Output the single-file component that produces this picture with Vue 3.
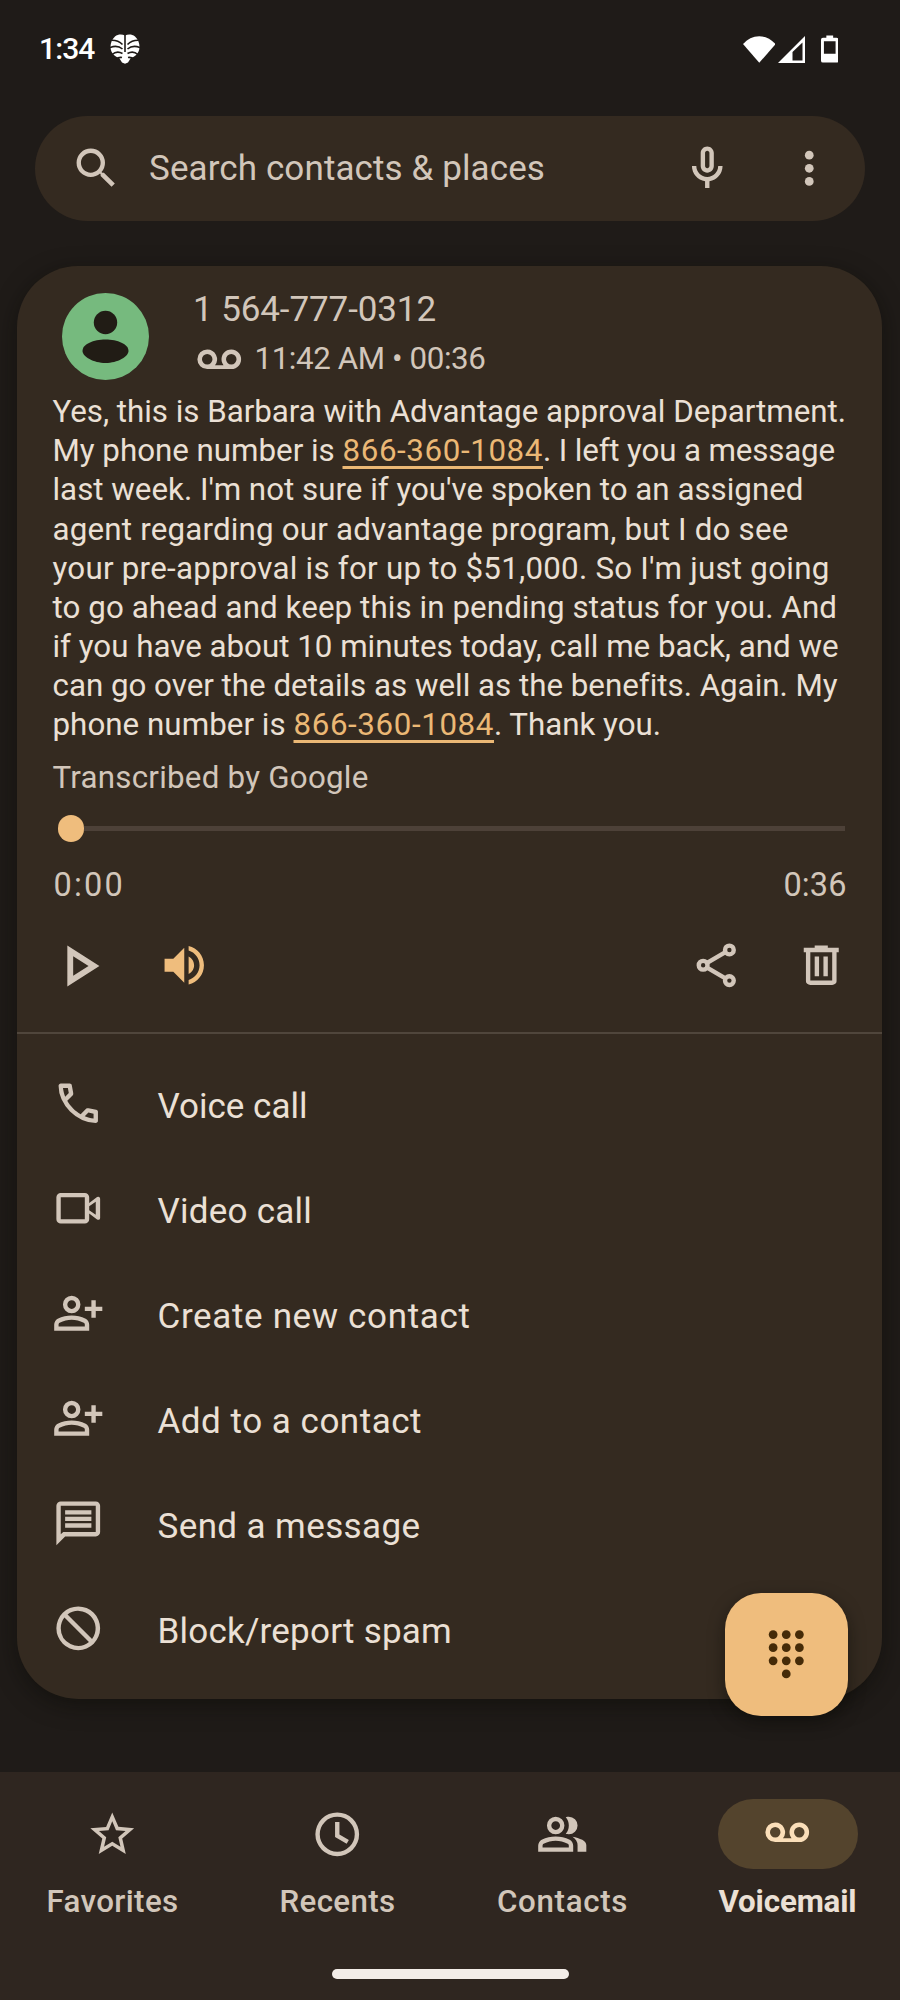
<script setup>
import { ref } from "vue"

// Spreads the letters of a text run so that it takes the given advance width
const vFit = {
  mounted(el, { value }) {
    const natural = el.getBoundingClientRect().width
    el.style.letterSpacing = `${(value - natural) / el.textContent.length}px`
  }
}

const transcript = [
  [{ text: "Yes, this is Barbara with Advantage approval Department.", width: 793.5 }],
  [
    { text: "My phone number is ", width: 290 },
    { text: "866-360-1084", width: 200.5, link: true },
    { text: ". I left you a message", width: 292 }
  ],
  [{ text: "last week. I'm not sure if you've spoken to an assigned", width: 751 }],
  [{ text: "agent regarding our advantage program, but I do see", width: 736 }],
  [{ text: "your pre-approval is for up to $51,000. So I'm just going", width: 777 }],
  [{ text: "to go ahead and keep this in pending status for you. And", width: 784.5 }],
  [{ text: "if you have about 10 minutes today, call me back, and we", width: 786 }],
  [{ text: "can go over the details as well as the benefits. Again. My", width: 784 }],
  [
    { text: "phone number is ", width: 241 },
    { text: "866-360-1084", width: 200.5, link: true },
    { text: ". Thank you.", width: 167 }
  ]
]

const personAdd =
  "M9 12a4 4 0 1 1 0-8 4 4 0 0 1 0 8zm0-2a2 2 0 1 0 0-4 2 2 0 0 0 0 4zM1 20v-2.8q0-.85.438-1.563T2.6 14.55q1.55-.775 3.15-1.163T9 13q1.65 0 3.25.387t3.15 1.163q.725.375 1.163 1.088T17 17.2V20H1zm2-2h12v-.8q0-.275-.137-.5t-.363-.35q-1.35-.675-2.725-1.012T9 15q-1.4 0-2.775.338T3.5 16.35q-.225.125-.363.35T3 17.2v.8zM18 14v-3h-3V9h3V6h2v3h3v2h-3v3h-2z"

const actions = [
  {
    label: "Voice call",
    width: 150,
    path: "M19.95 21q-3.125 0-6.175-1.363t-5.55-3.862q-2.5-2.5-3.863-5.55T3 4.05q0-.45.3-.75t.75-.3H8.1q.35 0 .625.237t.325.563l.65 3.5q.05.4-.025.675T9.4 8.45L6.975 10.9q.5.925 1.187 1.787t1.513 1.663q.775.775 1.625 1.438T13.1 17l2.35-2.35q.225-.225.588-.338t.712-.062l3.45.7q.35.1.575.363T21 15.9v4.05q0 .45-.3.75t-.75.3zM6.025 9l1.65-1.65L7.25 5H5.025q.125 1.025.35 2.025T6.025 9zm8.95 8.95q.975.425 1.988.675T19 18.95v-2.2l-2.35-.475-1.675 1.675z"
  },
  {
    label: "Video call",
    width: 154.5,
    path: "M4 19q-.825 0-1.413-.587T2 17V7q0-.825.587-1.413T4 5h11q.825 0 1.413.587T17 7v2.6l3.6-2.7q.5-.3.95-.1T22 7.6v8.8q0 .6-.45.8t-.95-.1L17 14.4V17q0 .825-.587 1.413T15 19H4zm0-2h11V7H4v10zm13-5.9v1.8l3 2.1V9l-3 2.1z"
  },
  { label: "Create new contact", width: 313, path: personAdd },
  { label: "Add to a contact", width: 264.5, path: personAdd },
  {
    label: "Send a message",
    width: 263,
    path: "M2 22V4q0-.825.588-1.413T4 2h16q.825 0 1.413.587T22 4v12q0 .825-.587 1.413T20 18H6l-4 4zm2-5h0l1.15-1H20V4H4v13zM6 6h12v2H6zM6 9h12v2H6zM6 12h12v2H6z"
  },
  {
    label: "Block/report spam",
    width: 294.5,
    path: "M12 2a10 10 0 1 0 0 20 10 10 0 0 0 0-20zM4 12c0-1.85.63-3.55 1.69-4.9L16.9 18.31A8 8 0 0 1 4 12zm14.31 4.9L7.1 5.69A8 8 0 0 1 18.31 16.9z"
  }
]

const voicemailIcon =
  "M6.5 7.5a4.5 4.5 0 0 0 0 9h11a4.5 4.5 0 1 0-3.55-1.75h-3.9A4.5 4.5 0 0 0 6.5 7.5zM6.5 9.6a2.4 2.4 0 1 1 0 4.8 2.4 2.4 0 0 1 0-4.8zM17.5 9.6a2.4 2.4 0 1 1 0 4.8 2.4 2.4 0 0 1 0-4.8z"

const tabs = [
  {
    label: "Favorites",
    width: 132,
    path: "M22 9.24l-7.19-.62L12 2 9.19 8.63 2 9.24l5.46 4.73L5.82 21 12 17.27 18.18 21l-1.63-7.03L22 9.24zM12 15.4l-3.76 2.27 1-4.28-3.32-2.88 4.38-.38L12 6.1l1.71 4.04 4.38.38-3.32 2.88 1 4.28L12 15.4z"
  },
  {
    label: "Recents",
    width: 116,
    path: "M12 2a10 10 0 1 0 0 20 10 10 0 0 0 0-20zm0 2a8 8 0 1 1 0 16 8 8 0 0 1 0-16zM11 6.4h2v5.7l4.3 2.5-1 1.7L11 13.2z"
  },
  {
    label: "Contacts",
    width: 131,
    path: "M9 12a4 4 0 1 1 0-8 4 4 0 0 1 0 8zm0-2a2 2 0 1 0 0-4 2 2 0 0 0 0 4zM1 20v-2.8q0-.85.438-1.563T2.6 14.55q1.55-.775 3.15-1.163T9 13q1.65 0 3.25.387t3.15 1.163q.725.375 1.163 1.088T17 17.2V20H1zm2-2h12v-.8q0-.275-.137-.5t-.363-.35q-1.35-.675-2.725-1.012T9 15q-1.4 0-2.775.338T3.5 16.35q-.225.125-.363.35T3 17.2v.8zM19 8q0 1.65-1.175 2.825T15 12q-.275 0-.7-.063t-.7-.137q.675-.8 1.038-1.775T15 8q0-1.05-.363-2.025T13.6 4.2q.35-.125.7-.163T15 4q1.65 0 2.825 1.175T19 8zM19 20v-3q0-1.1-.612-2.113T16.65 13.15q1.275.15 2.4.513t2.1.887q.9.5 1.375 1.112T23 17v3h-4z"
  },
  { label: "Voicemail", width: 138, path: voicemailIcon }
]

const activeTab = ref("Voicemail")

const keypadDots = [
  [6, 3], [12, 3], [18, 3],
  [6, 9], [12, 9], [18, 9],
  [6, 15], [12, 15], [18, 15],
  [12, 21]
]
</script>

<template>
  <div class="screen">
    <header class="status-bar">
      <span v-fit="55.5" class="clock">1:34</span>
      <svg class="leaf" viewBox="0 0 30 30">
        <path class="leaf-shape" d="M15 1.5C12 0 8 0 5 2.5 2 5 .5 9 .5 13c0 3.500 1.500 6.500 4 8.500 2 1.500 3.500 2 5 3L12 28.500l3 1.300 3-1.300 2.500-4c1.500-1 3-1.500 5-3 2.500-2 4-5 4-8.500 0-4-1.500-8-4.500-10.500C22 0 18 0 15 1.500z" />
        <path class="leaf-cut" d="M15 0v18M12.500 10.500C9.500 7.500 6 6.300 2 6.300M17.500 10.500c3-3 6.500-4.200 10.500-4.200M12.500 15C9 12 5 11.500 0 13.500M17.500 15c3.500-3 7.500-3.500 12.500-1.500M12.500 19.500C9 17.500 5.500 17.500 2 20.500M17.500 19.500c3.500-2 7-2 10.500 1M12 23.500c-2-.500-4 0-6 2M18 23.500c2-.500 4 0 6 2" />
      </svg>
      <div class="system-icons">
        <svg class="wifi" viewBox="0 0 33 27">
          <path d="M0 8C4.500 3 10 0 16.500 0S28.500 3 33 8L16.500 27z" />
        </svg>
        <svg class="signal" viewBox="0 0 27 27">
          <path d="M27 0v27H0zM24.500 6.500L14.500 16v8.500h10z" fill-rule="evenodd" />
        </svg>
        <svg class="battery" viewBox="0 0 18 28">
          <path d="M5.500 0h7v2.500h3.500a2 2 0 0 1 2 2V26a2 2 0 0 1-2 2H2a2 2 0 0 1-2-2V4.500a2 2 0 0 1 2-2h3.500zM3 6v13h12V6z" fill-rule="evenodd" />
        </svg>
      </div>
    </header>

    <div class="search">
      <svg class="icon" viewBox="0 0 24 24">
        <path d="M15.5 14h-.79l-.28-.27A6.471 6.471 0 0 0 16 9.5 6.5 6.5 0 1 0 9.5 16c1.61 0 3.09-.59 4.23-1.57l.27.28v.79l5 4.99L20.49 19l-4.99-5zm-6 0C7.01 14 5 11.99 5 9.5S7.01 5 9.5 5 14 7.01 14 9.5 11.99 14 9.5 14z" />
      </svg>
      <span class="search-text"><span v-fit="396">Search contacts &amp; places</span></span>
      <svg class="icon mic" viewBox="0 0 24 24">
        <path d="M12 14c1.66 0 3-1.34 3-3V5c0-1.66-1.34-3-3-3S9 3.340 9 5v6c0 1.660 1.340 3 3 3zm-1-9c0-.55.45-1 1-1s1 .45 1 1v6c0 .55-.45 1-1 1s-1-.45-1-1V5zm6 6c0 2.760-2.240 5-5 5s-5-2.240-5-5H5c0 3.530 2.610 6.430 6 6.920V21h2v-3.080c3.390-.49 6-3.390 6-6.920h-2z" />
      </svg>
      <svg class="icon" viewBox="0 0 24 24">
        <circle cx="12" cy="6" r="2" /><circle cx="12" cy="12" r="2" /><circle cx="12" cy="18" r="2" />
      </svg>
    </div>

    <main class="card">
      <div class="caller">
        <svg class="avatar" viewBox="0 0 87 87">
          <circle class="avatar-bg" cx="43.5" cy="43.5" r="43.5" />
          <circle cx="43.5" cy="29.5" r="11.7" />
          <path d="M20.500 58c0-7 11-11.500 23-11.500s23 4.500 23 11.500c0 5.500-11 12-23 12s-23-6.500-23-12z" />
        </svg>
        <div class="caller-text">
          <div class="caller-number"><span v-fit="243">1 564-777-0312</span></div>
          <div class="caller-meta">
            <svg class="icon" viewBox="0 0 24 24"><path :d="voicemailIcon" fill-rule="evenodd" /></svg>
            <span v-fit="231">11:42 AM • 00:36</span>
          </div>
        </div>
      </div>

      <div class="transcript">
        <div v-for="(line, i) in transcript" :key="i" class="line">
          <span v-for="part in line" :key="part.text" v-fit="part.width" :class="{ link: part.link }">{{ part.text }}</span>
        </div>
      </div>
      <div class="credit"><span v-fit="316">Transcribed by Google</span></div>

      <div class="slider">
        <div class="knob"></div>
        <div class="track"></div>
      </div>
      <div class="times">
        <span v-fit="71.5">0:00</span>
        <span v-fit="63">0:36</span>
      </div>

      <div class="controls">
        <svg class="icon play" viewBox="0 0 24 24">
          <path d="M10 8.64L15.27 12 10 15.36V8.64M8 5v14l11-7L8 5z" />
        </svg>
        <svg class="icon speaker" viewBox="0 0 24 24">
          <path d="M3 9v6h4l5 5V4L7 9H3zm13.5 3c0-1.77-1.02-3.29-2.5-4.03v8.05c1.48-.73 2.5-2.25 2.5-4.02zM14 3.23v2.06c2.89.86 5 3.54 5 6.71s-2.11 5.85-5 6.71v2.06c4.01-.91 7-4.49 7-8.77s-2.99-7.86-7-8.77z" />
        </svg>
        <svg class="icon share" viewBox="0 0 24 24">
          <circle cx="18" cy="5" r="2" /><circle cx="6" cy="12" r="2" /><circle cx="18" cy="19" r="2" />
          <path d="M8 10.850L16 6.150M8 13.150l8 4.700" />
        </svg>
        <svg class="icon" viewBox="0 0 24 24">
          <path d="M7 21q-.825 0-1.413-.5T5 19.300V6H4V4h5V3h6v1h5v2h-1v13.300q0 .700-.587 1.200T17 21H7zM7 6v13h10V6H7zM9 8h2v9H9zM13 8h2v9h-2z" fill-rule="evenodd" />
        </svg>
      </div>

      <ul class="actions">
        <li v-for="action in actions" :key="action.label">
          <svg class="icon" viewBox="0 0 24 24"><path :d="action.path" /></svg>
          <span v-fit="action.width">{{ action.label }}</span>
        </li>
      </ul>

      <button class="keypad" aria-label="Keypad">
        <svg viewBox="0 0 24 24">
          <circle v-for="([x, y], i) in keypadDots" :key="i" :cx="x" :cy="y" r="2" />
        </svg>
      </button>
    </main>

    <nav class="nav">
      <div class="tabs">
        <div
          v-for="tab in tabs"
          :key="tab.label"
          class="tab"
          :class="{ active: tab.label === activeTab }"
          @click="activeTab = tab.label"
        >
          <div class="pill">
            <svg class="icon" viewBox="0 0 24 24"><path :d="tab.path" /></svg>
          </div>
          <span v-fit="tab.width">{{ tab.label }}</span>
        </div>
      </div>
      <div class="home-bar"></div>
    </nav>
  </div>
</template>

<style>
body {
  margin: 0;
  background: #1f1b18;
}
</style>

<style scoped>
.screen {
  display: flex;
  flex-direction: column;
  box-sizing: border-box;
  width: 900px;
  height: 2000px;
  overflow: hidden;
  background: #1f1b18;
  color: #ebe0d5;
  font-family: Roboto, "Liberation Sans", sans-serif;
  font-size: 31.3px;
  line-height: 36px;
}

span {
  white-space: pre;
}

.icon {
  flex: none;
  width: 52.5px;
  height: 52.5px;
  fill: #d2c6ba;
}

.status-bar {
  display: flex;
  align-items: center;
  box-sizing: border-box;
  height: 116px;
  padding: 0 62px 18px 39px;
}

.clock {
  color: #fff;
  font-size: 30px;
  font-weight: 500;
}

.leaf {
  width: 30px;
  height: 30px;
  margin-left: 15.5px;
}

.leaf-shape {
  fill: #fff;
}

.leaf-cut {
  fill: none;
  stroke: #1f1b18;
  stroke-width: 1.6;
}

.system-icons {
  display: flex;
  align-items: center;
  margin-left: auto;
  fill: #fff;
}

.wifi {
  width: 32.5px;
  height: 27px;
}

.signal {
  width: 27px;
  height: 27px;
  margin: 1px 15.5px 0 3px;
}

.battery {
  width: 17.5px;
  height: 28px;
}

.search {
  display: flex;
  align-items: center;
  box-sizing: border-box;
  height: 104.5px;
  margin: 0 35px;
  padding: 0 30px 0 35px;
  border-radius: 53px;
  background: #342a20;
}

.search-text {
  flex: 1;
  margin: 2px 0 0 26.5px;
  color: #d2c6ba;
  font-size: 35px;
}

.mic {
  margin-right: 49px;
}

.card {
  position: relative;
  box-sizing: border-box;
  height: 1433.4px;
  margin: 45.1px 18px 0 17px;
  border-radius: 61px;
  background: #342a20;
  box-shadow: 0 6px 22px rgba(10, 10, 5, 0.5);
}

.caller {
  display: flex;
  box-sizing: border-box;
  height: 126.4px;
  padding: 26px 0 0 44.5px;
}

.avatar {
  width: 87px;
  height: 87px;
  margin-top: 1px;
  fill: #211c15;
}

.avatar-bg {
  fill: #76ba7e;
}

.caller-text {
  display: flex;
  flex-direction: column;
  gap: 13.5px;
  margin-left: 44.5px;
  color: #d2c6ba;
}

.caller-number {
  font-size: 35px;
}

.caller-meta {
  display: flex;
  align-items: center;
  height: 36px;
}

.caller-meta .icon {
  margin: 1px 9px 0 0;
}

.transcript {
  padding-left: 35.5px;
}

.line {
  display: flex;
  height: 39.2px;
  line-height: 39.2px;
}

.link {
  color: #ebb875;
  text-decoration: underline;
  text-decoration-thickness: 2.5px;
  text-underline-offset: 5px;
  text-decoration-skip-ink: none;
}

.credit {
  margin-top: 15.3px;
  padding-left: 35.5px;
  color: #d2c6ba;
}

.slider {
  display: flex;
  align-items: center;
  height: 26.4px;
  margin: 19.3px 37.3px 0 40.8px;
}

.knob {
  width: 26.4px;
  height: 26.4px;
  border-radius: 50%;
  background: #efbd7d;
}

.track {
  flex: 1;
  height: 5px;
  background: #4d4138;
}

.times {
  display: flex;
  justify-content: space-between;
  margin-top: 25.4px;
  padding: 0 35.5px 0 36.5px;
  color: #d2c6ba;
  font-size: 32.5px;
}

.controls {
  display: flex;
  align-items: center;
  height: 70px;
  margin-top: 27.7px;
  padding: 0 34.8px 30.8px 26.5px;
  border-bottom: 2.2px solid #50463c;
}

.play {
  width: 70px;
  height: 70px;
}

.speaker {
  margin: 0 auto 0 44.5px;
  fill: #efbd7d;
}

.share {
  margin-right: 52.5px;
  fill: none;
  stroke: #d2c6ba;
  stroke-width: 2;
}

.actions {
  margin: 0;
  padding: 17.5px 35px 0;
  list-style: none;
  font-size: 35px;
}

.actions li {
  display: flex;
  align-items: center;
  gap: 53px;
  height: 105px;
}

.actions span {
  margin-top: 6px;
}

/* floats over the bottom corner of the card */
.keypad {
  position: absolute;
  right: 34.5px;
  bottom: -17px;
  display: flex;
  align-items: center;
  justify-content: center;
  width: 122.5px;
  height: 122.5px;
  padding: 0;
  border: 0;
  border-radius: 36px;
  background: #efbd7d;
  box-shadow: 0 6px 16px rgba(10, 10, 5, 0.5);
}

.keypad svg {
  width: 52.5px;
  height: 52.5px;
  fill: #452b08;
  overflow: visible;
}

.nav {
  display: flex;
  flex-direction: column;
  align-items: center;
  flex: none;
  box-sizing: border-box;
  height: 228px;
  margin-top: 73px;
  padding-top: 27px;
  background: #2f2620;
}

.tabs {
  display: flex;
  width: 100%;
}

.tab {
  display: flex;
  flex: 1;
  flex-direction: column;
  align-items: center;
  gap: 15.5px;
  color: #d2c6ba;
  font-weight: 500;
}

.pill {
  display: flex;
  align-items: center;
  justify-content: center;
  width: 140px;
  height: 70px;
  border-radius: 35px;
}

.active {
  color: #ebe0d5;
  font-weight: 700;
}

.active .pill {
  background: #54442d;
}

.active .icon {
  margin-bottom: 3px;
  fill: #fbdfb9;
}

.home-bar {
  width: 237px;
  height: 9.7px;
  margin-top: 48.5px;
  border-radius: 5px;
  background: #f3ede8;
}
</style>
